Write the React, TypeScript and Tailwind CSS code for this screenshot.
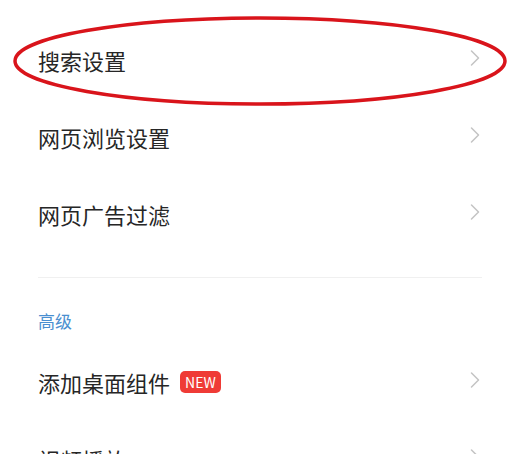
import { ChevronRight } from 'lucide-react';

const font = { fontFamily: '"Noto Sans CJK SC", "Noto Sans", sans-serif' };

function Row({ title, badge }: { title: string; badge?: string }) {
  return (
    <div className="flex h-[77px] items-center justify-between pl-[38px] pr-[38px]">
      <div className="flex items-center gap-[10px]">
        <span className="text-[22px] leading-none text-[#262626]">{title}</span>
        {badge && (
          <span className="flex h-[22px] items-center rounded-[5px] bg-[#ef3b36] px-[5px] text-[14px] leading-none text-white">
            {badge}
          </span>
        )}
      </div>
      <ChevronRight size={28} strokeWidth={1.3} className="-mt-[4px] text-[#c4c4c4]" />
    </div>
  );
}

export default function App() {
  return (
    <div className="relative h-[454px] w-[527px] overflow-hidden bg-white" style={font}>
      <div className="pt-[21px]">
        <Row title="搜索设置" />
        <Row title="网页浏览设置" />
        <Row title="网页广告过滤" />

        <div className="ml-[38px] mr-[45px] mt-[25px] h-px bg-[#f0f0f0]" />

        <div className="pl-[38px] pt-[34px] text-[17px] leading-none text-[#4a8fd0]">高级</div>

        <div className="mt-[14px]">
          <Row title="添加桌面组件" badge="NEW" />
          <Row title="视频播放" />
        </div>
      </div>

      {/* red annotation circle */}
      <svg className="pointer-events-none absolute left-0 top-0" width="527" height="454">
        <ellipse cx="260" cy="61" rx="245" ry="43" fill="none" stroke="#d9141b" strokeWidth="3.5" />
      </svg>
    </div>
  );
}
